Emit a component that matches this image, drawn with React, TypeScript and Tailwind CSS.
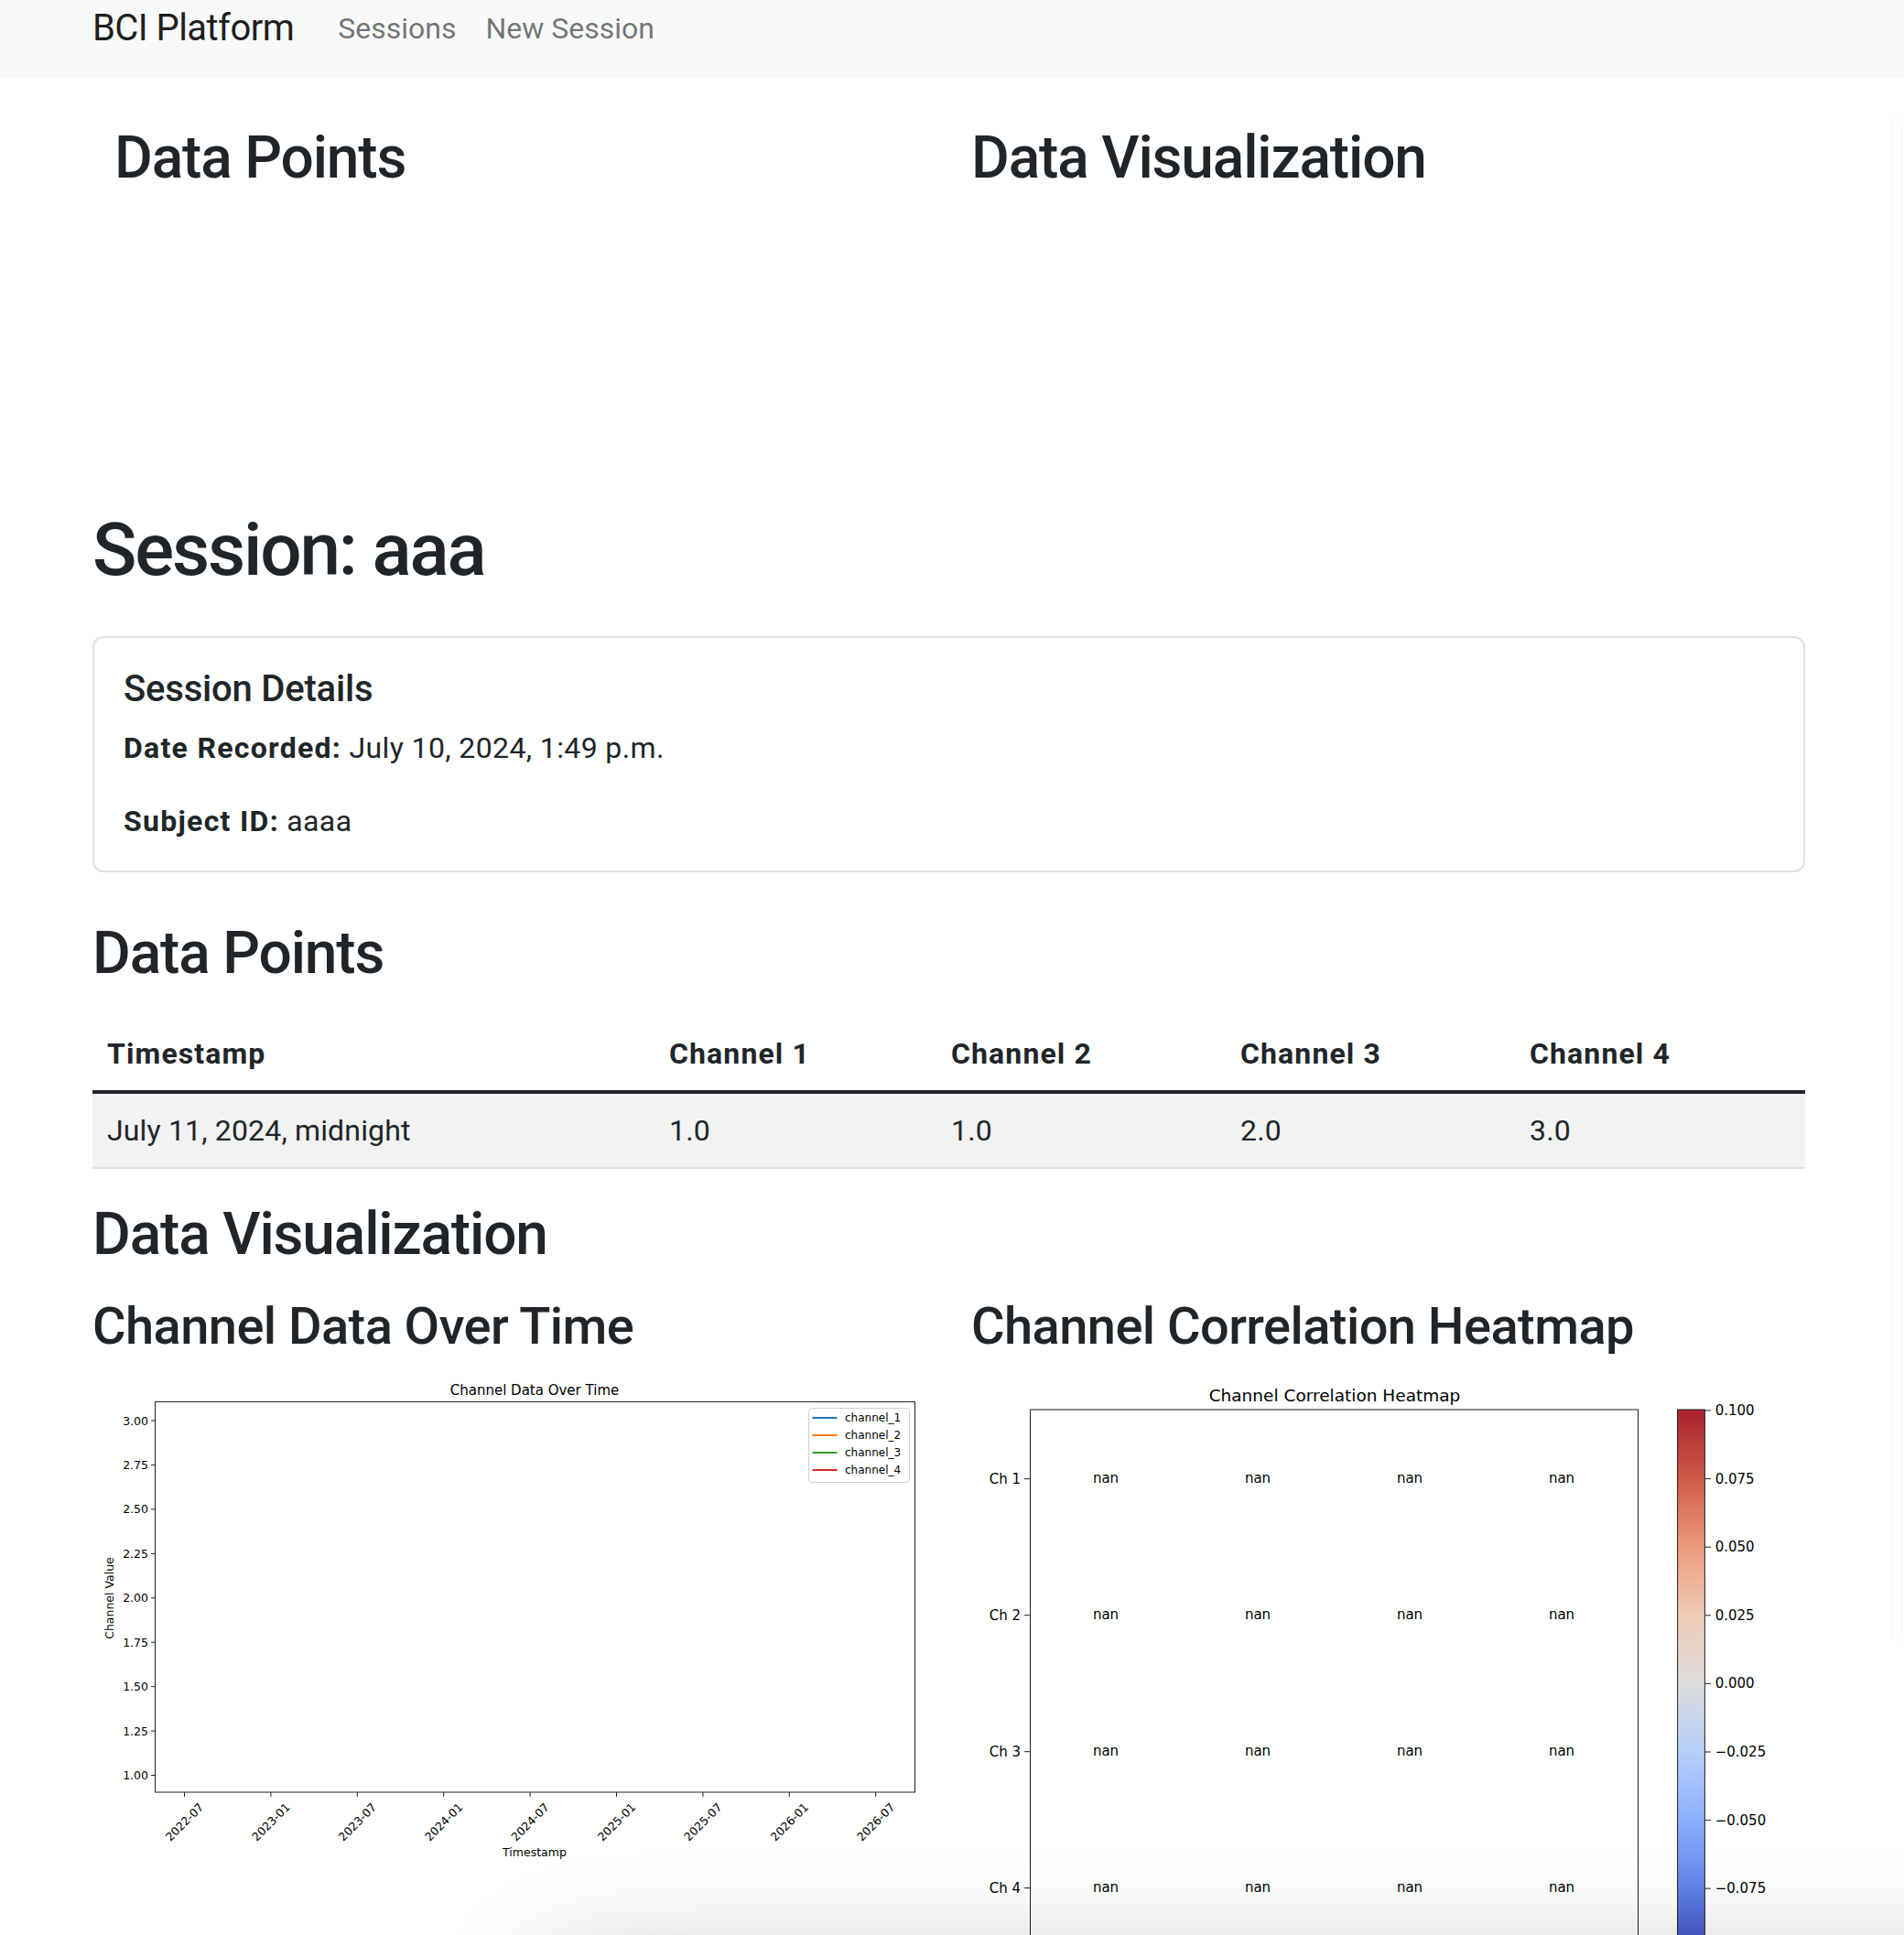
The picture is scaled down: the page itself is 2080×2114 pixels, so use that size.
const xTicks = ["2022-07", "2023-01", "2023-07", "2024-01", "2024-07", "2025-01", "2025-07", "2026-01", "2026-07"];
const yTicks = [1.0, 1.25, 1.5, 1.75, 2.0, 2.25, 2.5, 2.75, 3.0];
const legend = [
  { name: "channel_1", color: "#1f77b4" },
  { name: "channel_2", color: "#ff7f0e" },
  { name: "channel_3", color: "#2ca02c" },
  { name: "channel_4", color: "#d62728" },
];
const cbTicks = ["0.100", "0.075", "0.050", "0.025", "0.000", "\u22120.025", "\u22120.050", "\u22120.075"];
const chLabels = ["Ch 1", "Ch 2", "Ch 3", "Ch 4"];

function LineChart() {
  return (
    <svg width="911" height="616" viewBox="0 0 911 616" className="block font-['DejaVu_Sans',sans-serif]">
      <text x="483" y="20" fontSize="15" textAnchor="middle" dominantBaseline="central" fill="#000">
        Channel Data Over Time
      </text>
      <rect x="68.5" y="32.5" width="830" height="426.5" fill="#fff" stroke="#222" strokeWidth="1" />
      {yTicks.map((v) => {
        const y = 440.5 - (v - 1) * 193.75;
        return (
          <g key={v}>
            <line x1="64" y1={y} x2="68.5" y2={y} stroke="#222" strokeWidth="1" />
            <text x="61" y={y} fontSize="12.5" textAnchor="end" dominantBaseline="central" fill="#000">
              {v.toFixed(2)}
            </text>
          </g>
        );
      })}
      <text
        x="18"
        y="247"
        fontSize="12.5"
        textAnchor="middle"
        dominantBaseline="central"
        transform="rotate(-90 18 247)"
        fill="#000"
      >
        Channel Value
      </text>
      {xTicks.map((t, i) => {
        const x = 100.5 + i * 94.4;
        return (
          <g key={t}>
            <line x1={x} y1="459" x2={x} y2="464" stroke="#222" strokeWidth="1" />
            <text
              x={x}
              y="491.5"
              fontSize="12.5"
              textAnchor="middle"
              dominantBaseline="central"
              transform={`rotate(-45 ${x} 491.5)`}
              fill="#000"
            >
              {t}
            </text>
          </g>
        );
      })}
      <text x="483" y="524.5" fontSize="12.5" textAnchor="middle" dominantBaseline="central" fill="#000">
        Timestamp
      </text>
      {/* legend */}
      <rect x="782.5" y="39.5" width="110" height="81" rx="3" fill="#fff" fillOpacity="0.8" stroke="#d0d0d0" strokeWidth="1" />
      {legend.map((l, i) => {
        const y = 50 + i * 19;
        return (
          <g key={l.name}>
            <line x1="786.5" y1={y} x2="813.5" y2={y} stroke={l.color} strokeWidth="2" />
            <text x="822" y={y} fontSize="12" dominantBaseline="central" fill="#000">
              {l.name}
            </text>
          </g>
        );
      })}
    </svg>
  );
}

function Heatmap() {
  return (
    <svg width="911" height="616" viewBox="0 0 911 616" className="block font-['DejaVu_Sans',sans-serif]">
      <defs>
        <linearGradient id="coolwarm" x1="0" y1="0" x2="0" y2="1">
          <stop offset="0" stopColor="#a8202c" />
          <stop offset="0.125" stopColor="#cf5a48" />
          <stop offset="0.25" stopColor="#ec9a7c" />
          <stop offset="0.375" stopColor="#f0cbb6" />
          <stop offset="0.5" stopColor="#dddcdc" />
          <stop offset="0.625" stopColor="#b7cff9" />
          <stop offset="0.75" stopColor="#8db0fe" />
          <stop offset="0.875" stopColor="#6282ea" />
          <stop offset="1" stopColor="#3b4cc0" />
        </linearGradient>
      </defs>
      <text x="397" y="25.5" fontSize="18.5" textAnchor="middle" dominantBaseline="central" fill="#000">
        Channel Correlation Heatmap
      </text>
      <rect x="64.5" y="41" width="664" height="600" fill="#fff" stroke="#222" strokeWidth="1" />
      {chLabels.map((c, r) => {
        const y = 116.7 + r * 149;
        return (
          <g key={c}>
            <line x1="58" y1={y} x2="64.5" y2={y} stroke="#222" strokeWidth="1" />
            <text x="54" y={y} fontSize="15" textAnchor="end" dominantBaseline="central" fill="#000">
              {c}
            </text>
            {[0, 1, 2, 3].map((k) => (
              <text
                key={k}
                x={147 + k * 166}
                y={y - 1}
                fontSize="15"
                textAnchor="middle"
                dominantBaseline="central"
                fill="#000"
              >
                nan
              </text>
            ))}
          </g>
        );
      })}
      <rect x="771.6" y="41" width="29.8" height="597" fill="url(#coolwarm)" stroke="#222" strokeWidth="1" />
      {cbTicks.map((t, i) => {
        const y = 42 + i * 74.6;
        return (
          <g key={t}>
            <line x1="801.4" y1={y} x2="808" y2={y} stroke="#222" strokeWidth="1" />
            <text x="812.7" y={y} fontSize="15" dominantBaseline="central" fill="#000">
              {t}
            </text>
          </g>
        );
      })}
    </svg>
  );
}

export default function App() {
  return (
    <div className="relative h-[2114px] w-full overflow-hidden bg-white font-['Roboto','Liberation_Sans',sans-serif] text-[#212529]">
      {/* Navbar */}
      <nav className="h-[85px] bg-[#f8f9fa]">
        <div className="flex h-[62px] items-center pl-[101px]">
          <span className="mr-[32px] text-[40px] leading-[60px] tracking-[-0.014em] text-black/90">BCI Platform</span>
          <a className="px-[16px] text-[32px] leading-[48px] text-black/55">Sessions</a>
          <a className="px-[16px] text-[32px] leading-[48px] text-black/55">New Session</a>
        </div>
      </nav>

      <div className="pl-[101px] pr-[108px]">
        {/* Top row */}
        <div className="mt-[50px] flex">
          <div className="w-[960px] pl-[24px]">
            <h2 className="text-[64px] font-medium leading-[1.2] tracking-[-0.018em]">Data Points</h2>
          </div>
          <div className="flex-1">
            <h2 className="text-[64px] font-medium leading-[1.2] tracking-[-0.018em]">Data Visualization</h2>
          </div>
        </div>

        <h1 className="mt-[341px] text-[80px] font-medium leading-[96px] tracking-[-0.027em]">Session: aaa</h1>

        {/* Session details card */}
        <div className="mt-[46px] rounded-[12px] border-2 border-[#dee2e6] px-[32px] pt-[32px] pb-[30px]">
          <h5 className="mb-[16px] text-[40px] font-medium leading-[48px] tracking-[-0.005em]">Session Details</h5>
          <p className="mb-[32px] text-[32px] leading-[48px] tracking-[0.012em]">
            <strong className="font-bold tracking-[0.04em]">Date Recorded:</strong> July 10, 2024, 1:49 p.m.
          </p>
          <p className="text-[32px] leading-[48px] tracking-[0.012em]">
            <strong className="font-bold tracking-[0.04em]">Subject ID:</strong> aaaa
          </p>
        </div>

        <h2 className="mt-[51px] text-[64px] font-medium leading-[1.2] tracking-[-0.018em]">Data Points</h2>

        {/* Table */}
        <table className="mt-[30px] w-full border-collapse text-left text-[32px] leading-[48px]">
          <thead>
            <tr>
              <th className="w-[614px] p-[16px] font-bold tracking-[0.035em]">Timestamp</th>
              <th className="w-[308px] p-[16px] font-bold tracking-[0.035em]">Channel 1</th>
              <th className="w-[316px] p-[16px] font-bold tracking-[0.035em]">Channel 2</th>
              <th className="w-[316px] p-[16px] font-bold tracking-[0.035em]">Channel 3</th>
              <th className="p-[16px] font-bold tracking-[0.035em]">Channel 4</th>
            </tr>
          </thead>
          <tbody className="border-t-4 border-[#212529]">
            <tr className="border-b-2 border-[#dee2e6] bg-[#f2f2f2] tracking-[0.005em]">
              <td className="p-[16px]">July 11, 2024, midnight</td>
              <td className="p-[16px]">1.0</td>
              <td className="p-[16px]">1.0</td>
              <td className="p-[16px]">2.0</td>
              <td className="p-[16px]">3.0</td>
            </tr>
          </tbody>
        </table>

        <h2 className="mt-[34px] text-[64px] font-medium leading-[1.2] tracking-[-0.018em]">Data Visualization</h2>

        {/* Charts */}
        <div className="mt-[29px] flex">
          <div className="w-[960px]">
            <h3 className="mb-[15px] text-[56px] font-medium leading-[1.2] tracking-[-0.01em]">Channel Data Over Time</h3>
            <LineChart />
          </div>
          <div className="flex-1">
            <h3 className="mb-[15px] text-[56px] font-medium leading-[1.2] tracking-[-0.01em]">Channel Correlation Heatmap</h3>
            <Heatmap />
          </div>
        </div>
      </div>

      {/* overlay scrollbar track */}
      <div className="absolute left-[2066px] top-[128px] h-[1665px] w-[12px] rounded-full border border-black/[0.03]" />
      {/* shadow of a panel below the fold */}
      <div className="absolute left-[580px] top-[2150px] h-[300px] w-[1700px] rounded-[80px] bg-white shadow-[0_0_110px_20px_rgba(0,0,0,0.2)]" />
    </div>
  );
}
